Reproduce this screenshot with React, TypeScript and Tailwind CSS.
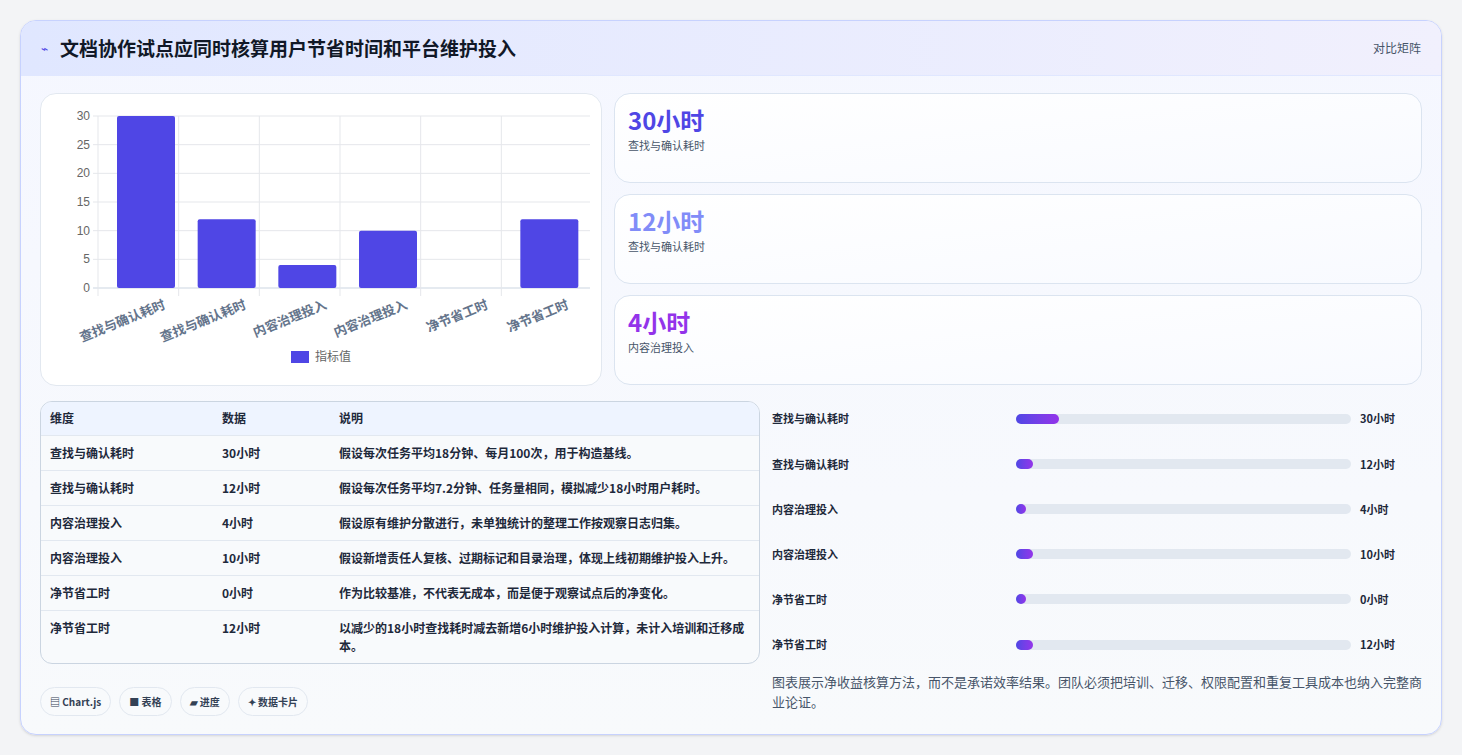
import React from 'react';

const font = { fontFamily: '"Noto Sans CJK SC", "Noto Sans", sans-serif' };

const rows = [
  { k: '查找与确认耗时', v: '30小时', d: '假设每次任务平均18分钟、每月100次，用于构造基线。', w: 43 },
  { k: '查找与确认耗时', v: '12小时', d: '假设每次任务平均7.2分钟、任务量相同，模拟减少18小时用户耗时。', w: 17 },
  { k: '内容治理投入', v: '4小时', d: '假设原有维护分散进行，未单独统计的整理工作按观察日志归集。', w: 10 },
  { k: '内容治理投入', v: '10小时', d: '假设新增责任人复核、过期标记和目录治理，体现上线初期维护投入上升。', w: 17 },
  { k: '净节省工时', v: '0小时', d: '作为比较基准，不代表无成本，而是便于观察试点后的净变化。', w: 10 },
  { k: '净节省工时', v: '12小时', d: '以减少的18小时查找耗时减去新增6小时维护投入计算，未计入培训和迁移成本。', w: 17 },
];

const vals = [30, 12, 4, 10, 0, 12];

function Chart() {
  // plot area in card coords
  const x0 = 57, x1 = 541, yTop = 22, yBot = 194;
  const cw = (x1 - x0) / 6;
  const ys = (v: number) => yBot - (v / 30) * (yBot - yTop);
  return (
    <svg width="561" height="292" className="block">
      {[0, 5, 10, 15, 20, 25, 30].map((t) => (
        <g key={t}>
          <line x1={x0 - 5} x2={x1 + 8} y1={ys(t)} y2={ys(t)} stroke={t === 0 ? '#cbd5e1' : '#e5e7eb'} />
          <text x={x0 - 8} y={ys(t) + 4} textAnchor="end" fontSize="12" fill="#666" fontFamily="Liberation Sans, sans-serif">{t}</text>
        </g>
      ))}
      {[0, 1, 2, 3, 4, 5].map((i) => (
        <line key={i} x1={x0 + i * cw} x2={x0 + i * cw} y1={yTop} y2={yBot + 8} stroke="#e5e7eb" />
      ))}
      {vals.map((v, i) =>
        v > 0 ? (
          <rect key={i} x={x0 + i * cw + 19} y={ys(v)} width={58} height={yBot - ys(v)} rx="2" fill="#4f46e5" />
        ) : null
      )}
      {rows.map((r, i) => (
        <text
          key={i}
          transform={`translate(${x0 + i * cw + cw / 2 + 28}, ${yBot + 20}) rotate(-22)`}
          textAnchor="end"
          fontSize="13"
          fontWeight="600"
          fill="#64748b"
          style={font}
        >
          {r.k}
        </text>
      ))}
      <rect x="250" y="257" width="18" height="12" fill="#4f46e5" />
      <text x="274" y="267" fontSize="12" fill="#666" style={font}>指标值</text>
    </svg>
  );
}

const stats = [
  { v: '30小时', l: '查找与确认耗时', c: 'text-[#4f46e5]' },
  { v: '12小时', l: '查找与确认耗时', c: 'text-[#818cf8]' },
  { v: '4小时', l: '内容治理投入', c: 'text-[#9333ea]' },
];

export default function App() {
  return (
    <div className="min-h-screen bg-[#f3f4f6] p-5" style={font}>
      <div className="rounded-2xl border border-[#c7d2fe] bg-gradient-to-b from-[#f5f7ff] to-[#f8fafc] overflow-hidden shadow-sm">
        <div className="flex items-center justify-between h-[55px] px-5 bg-gradient-to-r from-[#e0e7ff] to-[#f1f0fd] border-b border-[#e0e7ff]">
          <div className="flex items-center gap-3">
            <span className="text-[#4f46e5] text-xs">⌁</span>
            <h1 className="text-[19px] font-bold text-[#111827]">文档协作试点应同时核算用户节省时间和平台维护投入</h1>
          </div>
          <span className="text-[12px] text-[#475569]">对比矩阵</span>
        </div>
        <div className="px-[19px] pt-[17px] pb-[18px]">
          <div className="flex gap-[12px]">
            <div className="w-[562px] h-[293px] shrink-0 rounded-2xl border border-[#e2e8f0] bg-white overflow-hidden">
              <Chart />
            </div>
            <div className="flex-1 flex flex-col gap-[11px]">
              {stats.map((s, i) => (
                <div key={i} className="h-[90px] rounded-2xl border border-[#dbe4f0] bg-gradient-to-br from-white to-[#f8faff] px-[13px] pt-[10px]">
                  <div className={`text-[24px] font-bold leading-[32px] ${s.c}`}>{s.v}</div>
                  <div className="text-[11px] text-[#475569] mt-[1px]">{s.l}</div>
                </div>
              ))}
            </div>
          </div>
          <div className="flex gap-[12px] mt-[15px]">
            <div className="w-[720px] shrink-0">
              <div className="rounded-xl border border-[#cbd5e1] bg-[#f8fafc] overflow-hidden">
                <table className="w-full text-[12px] text-[#1e293b]">
                  <thead>
                    <tr className="bg-[#eef4ff] text-left text-[#1e293b]">
                      <th className="h-[33px] pl-[9px] w-[181px] font-semibold">维度</th>
                      <th className="w-[117px] font-semibold">数据</th>
                      <th className="font-semibold">说明</th>
                    </tr>
                  </thead>
                  <tbody>
                    {rows.map((r, i) => (
                      <tr key={i} className="border-t border-[#e2e8f0] align-top">
                        <td className="pl-[9px] py-[8px] font-semibold leading-[18px]">{r.k}</td>
                        <td className="py-[8px] font-semibold leading-[18px]">{r.v}</td>
                        <td className="py-[8px] pr-3 font-semibold leading-[18px]">{r.d}</td>
                      </tr>
                    ))}
                  </tbody>
                </table>
              </div>
              <div className="flex gap-[8px] mt-[23px]">
                {['▤ Chart.js', '■ 表格', '▰ 进度', '✦ 数据卡片'].map((c) => (
                  <span key={c} className="h-[29px] px-[9px] flex items-center rounded-full border border-[#e2e8f0] bg-[#f8fafc] text-[10px] font-semibold text-[#334155]">{c}</span>
                ))}
              </div>
            </div>
            <div className="flex-1">
              <div className="flex flex-col -mt-[5px]">
                {rows.map((r, i) => (
                  <div key={i} className="h-[45.2px] flex items-center">
                    <span className="w-[244px] text-[11px] font-semibold text-[#1e293b]">{r.k}</span>
                    <div className="w-[335px] h-[10px] rounded-full bg-[#e2e8f0]">
                      <div className="h-[10px] rounded-full bg-gradient-to-r from-[#4f46e5] to-[#9333ea]" style={{ width: r.w }} />
                    </div>
                    <span className="ml-[9px] text-[11px] font-bold text-[#1e293b]">{r.v}</span>
                  </div>
                ))}
              </div>
              <p className="mt-[5px] text-[13px] leading-[20px] text-[#475569]">图表展示净收益核算方法，而不是承诺效率结果。团队必须把培训、迁移、权限配置和重复工具成本也纳入完整商业论证。</p>
            </div>
          </div>
        </div>
      </div>
    </div>
  );
}
